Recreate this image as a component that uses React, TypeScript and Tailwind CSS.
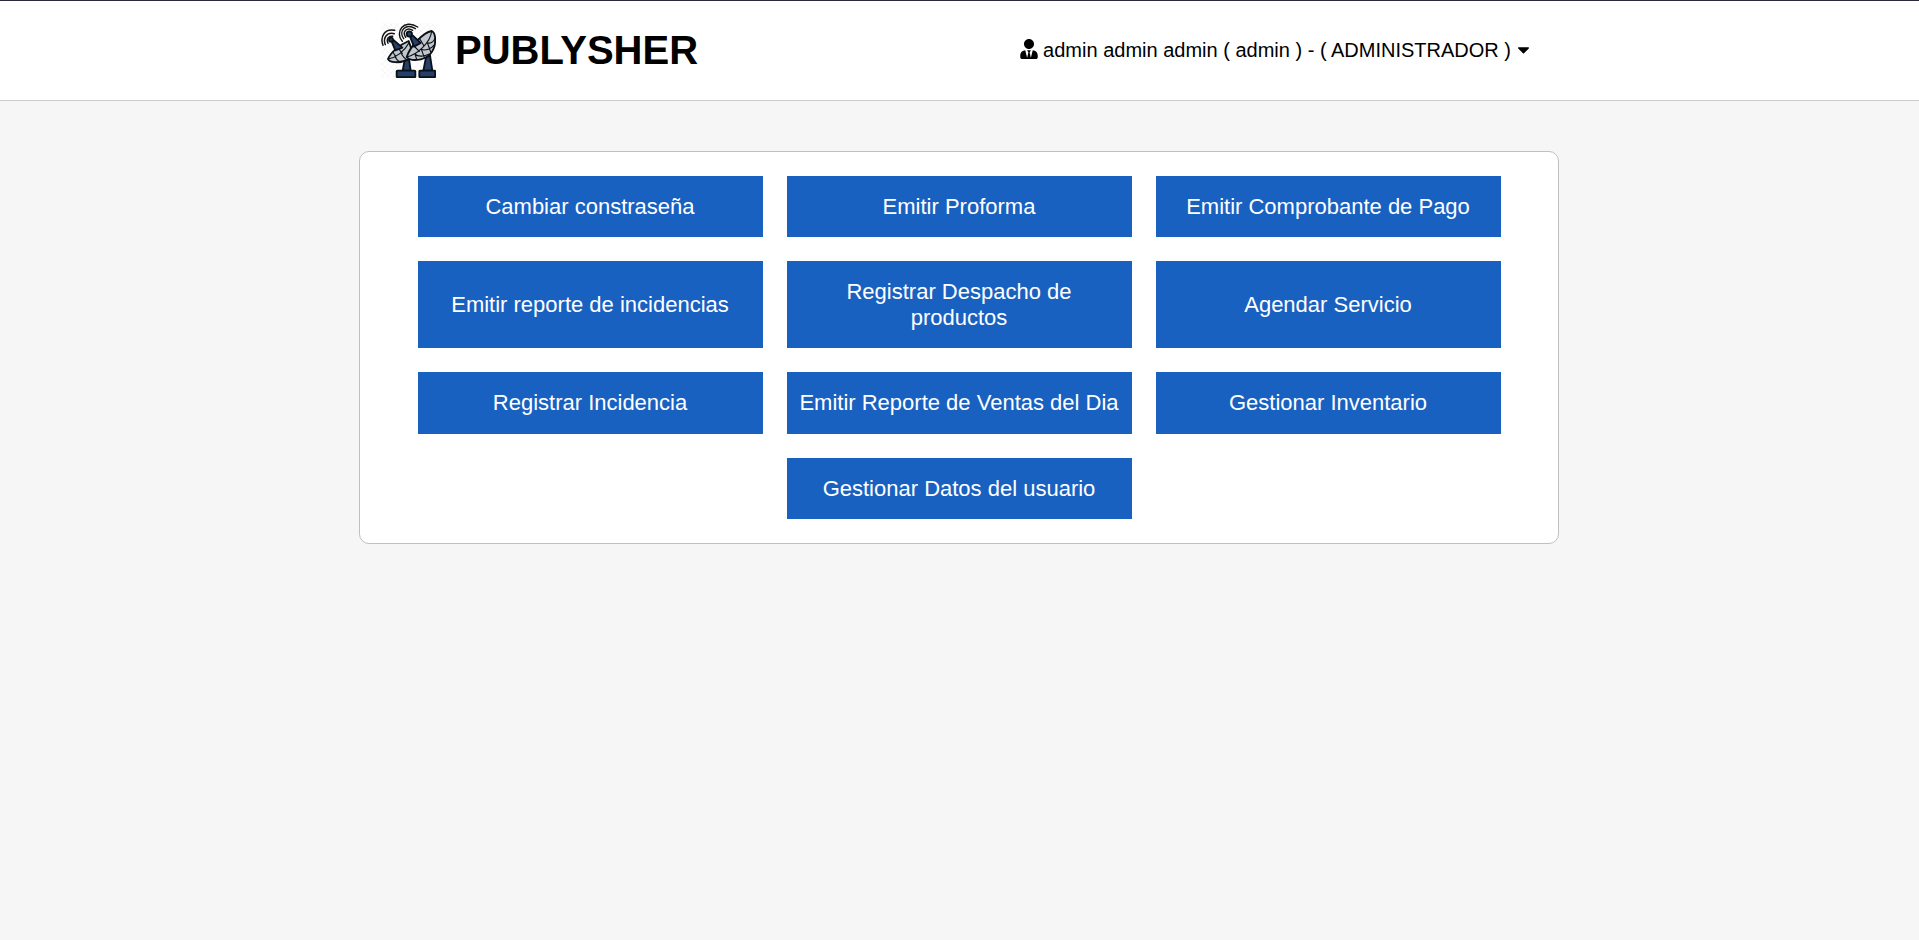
import { FaCaretDown, FaUserTie } from "react-icons/fa";

const actions = [
  "Cambiar constraseña",
  "Emitir Proforma",
  "Emitir Comprobante de Pago",
  "Emitir reporte de incidencias",
  "Registrar Despacho de productos",
  "Agendar Servicio",
  "Registrar Incidencia",
  "Emitir Reporte de Ventas del Dia",
  "Gestionar Inventario",
  "Gestionar Datos del usuario",
];

function Logo() {
  return (
    <svg className="h-[55px] w-[55px] shrink-0" viewBox="33 39 165 165" fill="none" strokeLinecap="round" strokeLinejoin="round">
      <defs>
        <pattern id="mesh" width="18" height="18" patternUnits="userSpaceOnUse">
          <path d="M0 0L18 18M18 0L0 18" stroke="#f1f1f1" strokeWidth="2" />
        </pattern>
      </defs>
      <rect x="33" y="39" width="165" height="165" fill="url(#mesh)" />
      <g stroke="#0b1016" strokeWidth="5.5">
        {/* pedestals */}
        <path d="M104 150L98 182H122L117 146Z" fill="#24406a" />
        <path d="M168 142L160 182H187L180 136Z" fill="#24406a" />
        <rect x="80" y="182" width="56" height="19.5" rx="2" fill="#24406a" />
        <rect x="148" y="182" width="47.5" height="19.5" rx="2" fill="#24406a" />
        {/* small dish */}
        <path d="M54 147C58 158 88 161 114 149L128 128L116 93C92 103 62 126 54 147Z" fill="#c1c7cc" />
        <path d="M54 147C78 143 103 124 117 98M76 142C79 148 82 152 88 155M94 131C98 138 104 145 110 149M70 128L78 142M84 114L97 130" strokeWidth="3.4" />
        {/* large dish */}
        <path d="M110 141C122 155 158 153 180 133C201 111 199 70 185 63C160 68 122 106 110 141Z" fill="#c1c7cc" />
        <path d="M110 141C140 135 182 98 185 63M135 132C144 142 164 139 178 132M154 118C166 124 184 116 194 104M172 98C180 102 190 96 195 86M135 132L140 148M154 118L163 142M172 98L182 126M150 88L162 108M132 108L148 124" strokeWidth="3.4" />
        {/* feed horns */}
        <path d="M66 97L76 121L97 113L72 91Z" fill="#24406a" />
        <path d="M121 82L132 110L152 99L128 76Z" fill="#24406a" />
        <circle cx="63" cy="89" r="6" fill="#24406a" />
        <circle cx="118" cy="72" r="8" fill="#24406a" />
      </g>
      <g stroke="#141414" strokeWidth="4.4">
        <path d="M39 106C29 80 45 54 74 61M46 104C38 84 50 66 73 71M54 100C48 86 56 77 68 79" />
        <path d="M97 94C73 68 101 24 143 51M101 86C84 62 108 38 136 56M107 82C95 64 112 50 128 61" />
      </g>
    </svg>
  );
}

export default function App() {
  return (
    <div className="min-h-screen bg-[#f6f6f6] font-['Liberation_Sans',Arial,sans-serif] text-black">
      <header className="h-[101px] border-t border-b border-t-[#2b2a3a] border-b-[#cccccc] bg-white pr-px">
        <div className="mx-auto flex h-full w-[1200px] items-center justify-between pr-[29px] pl-[22px]">
          <div className="flex items-center gap-[19px]">
            <Logo />
            <h1 className="pb-0.5 text-[40px] leading-[46px] font-bold">PUBLYSHER</h1>
          </div>
          <button className="flex items-center pb-0.5 text-[20px] leading-[22px] whitespace-nowrap">
            <FaUserTie className="mr-[5px] mb-0.5 h-5 w-[18px]" />
            <span>admin admin admin ( admin ) - ( ADMINISTRADOR )</span>
            <FaCaretDown className="ml-1.5 h-[19px] w-[13px]" />
          </button>
        </div>
      </header>
      <div className="pt-[50px] pr-px">
        <main className="mx-auto w-[1200px] rounded-[10px] border border-[#c0c0c0] bg-white px-11 py-6">
          <div className="flex flex-wrap justify-center gap-6">
            {actions.map((label) => (
              <button
                key={label}
                className="flex w-[345px] items-center justify-center bg-[#1961c1] px-[11px] py-[17.92px] text-center text-[22px] leading-[25.6px] text-white"
              >
                {label}
              </button>
            ))}
          </div>
        </main>
      </div>
    </div>
  );
}
